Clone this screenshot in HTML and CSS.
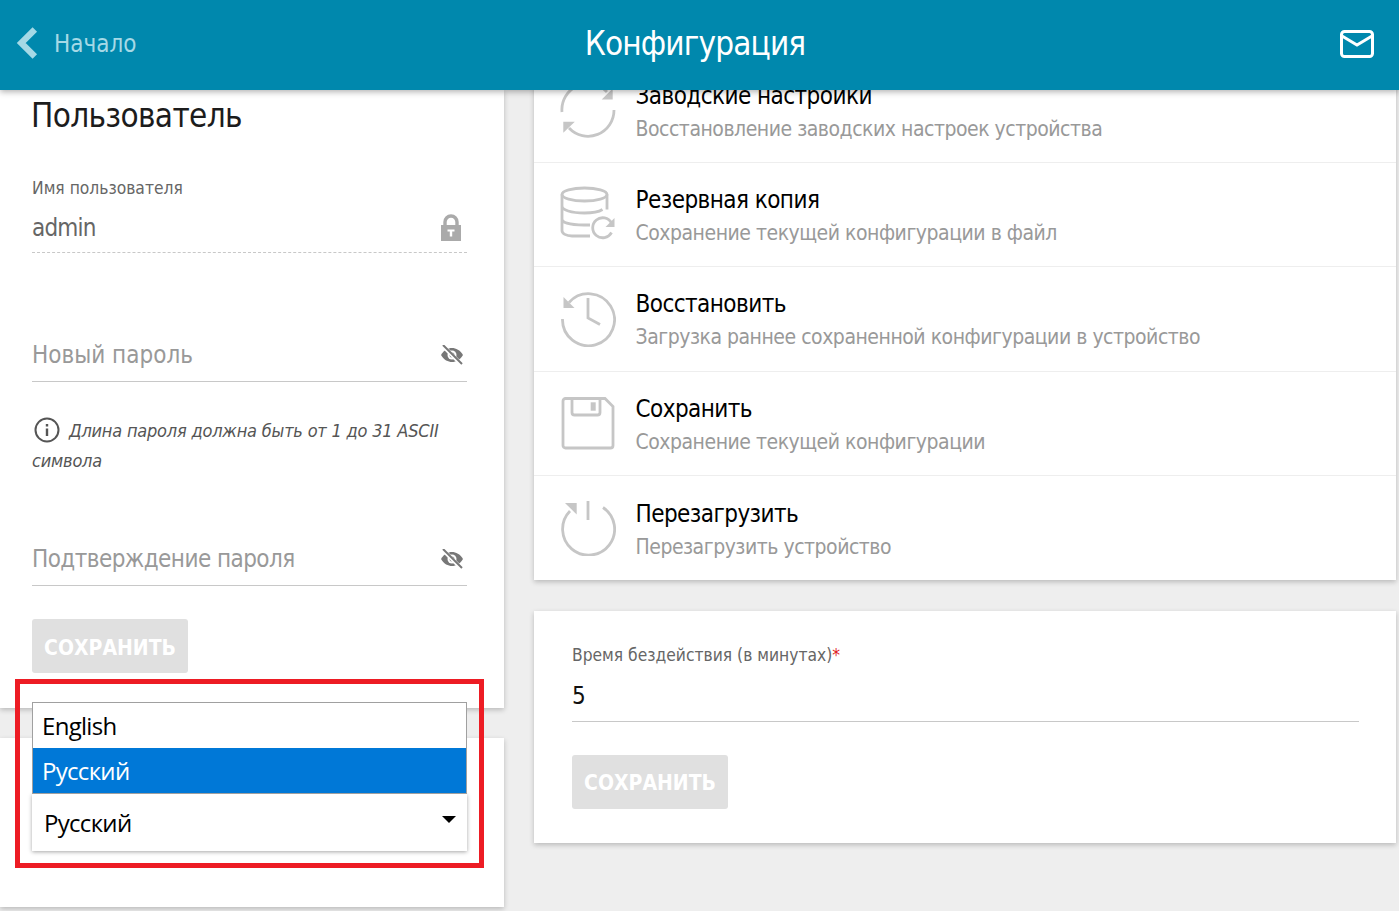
FILE: index.html
```html
<!DOCTYPE html>
<html lang="ru">
<head>
  <meta charset="UTF-8" />
  <title>Конфигурация</title>
  <link rel="stylesheet" href="styles.css">
</head>
<body>

<header class="topbar">
  <a class="back">
    <svg class="back-icon" viewBox="0 0 22 32"><path d="M18 3 5 16l13 13" fill="none" stroke="currentColor" stroke-width="6"/></svg>
    <span>Начало</span>
  </a>
  <h1 class="topbar-title">Конфигурация</h1>
  <svg class="mail-icon" viewBox="0 0 34 28"><rect x="1.5" y="1.5" width="31" height="25" rx="3" fill="none" stroke="#fff" stroke-width="3"/><path d="M2 6l15 9L32 6" fill="none" stroke="#fff" stroke-width="3"/></svg>
</header>

<main class="page">
  <div class="col-left">
    <section class="card user-card">
      <h2 class="card-title">Пользователь</h2>
      <div class="field-label field-label-first">Имя пользователя</div>
      <div class="field field-locked">
        <span class="field-value muted">admin</span>
        <svg class="lock-icon" viewBox="0 0 20 27"><path d="M4 12V8a6 6 0 0 1 12 0v4" fill="none" stroke="#aaa" stroke-width="3.4"/><path d="M0 11h20v16H0z" fill="#aaa"/><path d="M6.5 15.500h7v2h-2.300v5H8.800v-5H6.500z" fill="#fff"/></svg>
      </div>
      <div class="field field-new">
        <span class="placeholder">Новый пароль</span>
        <svg class="eye-icon" viewBox="0 0 22 20"><use href="#eye-off"/></svg>
      </div>
      <p class="hint">
        <svg class="info-icon" viewBox="0 0 26 26"><circle cx="13" cy="13" r="11.5" fill="none" stroke="#555" stroke-width="2"/><path d="M11.8 11.5h2.4v7.5h-2.4zM11.8 7h2.4v2.4h-2.4z" fill="#555"/></svg>
        Длина пароля должна быть от 1 до 31 ASCII символа
      </p>
      <div class="field field-confirm">
        <span class="placeholder">Подтверждение пароля</span>
        <svg class="eye-icon" viewBox="0 0 22 20"><use href="#eye-off"/></svg>
      </div>
      <button class="btn-save">СОХРАНИТЬ</button>
    </section>

    <section class="card lang-card">
      <div class="lang-select">
        <span>Русский</span>
        <i class="caret"></i>
      </div>
      <ul class="lang-list">
        <li>English</li>
        <li class="selected">Русский</li>
      </ul>
      <div class="highlight"></div>
    </section>
  </div>

  <div class="col-right">
    <section class="card menu-card">
      <div class="menu-row">
        <svg class="menu-icon" viewBox="0 0 56 56"><path d="M2 30A26 26 0 0 1 47 10M54 28A26 26 0 0 1 9 46"/><path class="solid" d="M52.7 6.500v11h-11zM3.300 50.700v-11h11.500z"/></svg>
        <div class="menu-text"><div class="menu-title">Заводские настройки</div><div class="menu-sub">Восстановление заводских настроек устройства</div></div>
      </div>
      <div class="menu-row">
        <svg class="menu-icon" viewBox="0 0 56 56"><ellipse cx="24.500" cy="8.500" rx="22.500" ry="6.500"/><path d="M2 8.500v36c0 3 4 5.500 10 5.500h18M2 20c0 4 9 7 22.500 7 6 0 14-1 18-3.500M47 8.500v15M2 33c0 3 6 6 22 6h6"/><path d="M51.500 37a10 10 0 1 0 0 9.500"/><path class="solid" d="M54.500 32v9h-9z"/></svg>
        <div class="menu-text"><div class="menu-title">Резервная копия</div><div class="menu-sub">Сохранение текущей конфигурации в файл</div></div>
      </div>
      <div class="menu-row">
        <svg class="menu-icon" viewBox="0 0 56 56"><path d="M9 11.500A26 26 0 1 1 2.500 28"/><path class="solid" d="M3.500 6v11h11z"/><path d="M28 7v20l12 6.500"/></svg>
        <div class="menu-text"><div class="menu-title">Восстановить</div><div class="menu-sub">Загрузка раннее сохраненной конфигурации в устройство</div></div>
      </div>
      <div class="menu-row">
        <svg class="menu-icon" viewBox="0 0 56 56"><path d="M5.500 3.500h39.500l8 8v39a2.500 2.500 0 0 1-2.500 2.500H5.500A2.500 2.500 0 0 1 3 50.500V6a2.500 2.500 0 0 1 2.500-2.500z"/><path d="M12 3.500v14a2.500 2.500 0 0 0 2.500 2.500h23a2.500 2.500 0 0 0 2.500-2.500v-14"/><path class="solid" d="M30.700 7.300h5v8.400h-5z"/></svg>
        <div class="menu-text"><div class="menu-title">Сохранить</div><div class="menu-sub">Сохранение текущей конфигурации</div></div>
      </div>
      <div class="menu-row">
        <svg class="menu-icon" viewBox="0 0 56 56"><path d="M43 7.500A26 26 0 1 1 10 11"/><path d="M28 1v19"/><path class="solid" d="M16.700 3v11.500L5 3z"/></svg>
        <div class="menu-text"><div class="menu-title">Перезагрузить</div><div class="menu-sub">Перезагрузить устройство</div></div>
      </div>
    </section>

    <section class="card idle-card">
      <div class="field-label">Время бездействия (в минутах)<span class="required">*</span></div>
      <div class="field field-idle"><span class="field-value">5</span></div>
      <button class="btn-save">СОХРАНИТЬ</button>
    </section>
  </div>
</main>

<svg class="defs" width="0" height="0">
  <symbol id="eye-off" viewBox="0 0 22 20">
    <path d="M0 10C3 5 7 3 11 3s8 2 11 7c-3 5-7 7-11 7S3 15 0 10z" fill="#777"/>
    <circle cx="11" cy="10" r="4.500" fill="#fff"/>
    <circle cx="11" cy="10" r="2.500" fill="#777"/>
    <path d="M2 1l18 18" stroke="#fff" stroke-width="4"/>
    <path d="M2 0l19 19" stroke="#777" stroke-width="2"/>
  </symbol>
</svg>

</body>
</html>
```

FILE: styles.css
```css
html, body {
  margin: 0;
  height: 100%;
}
body {
  font-family: "DejaVu Sans", sans-serif;
  font-stretch: condensed;
  background: #eeeeee;
  color: #111;
  overflow: hidden;
}
.defs {
  position: absolute;
}

/* top bar */
.topbar {
  position: relative;
  z-index: 5;
  height: 90px;
  background: #0088ad;
  box-shadow: 0 2px 6px rgba(0,0,0,0.3);
  display: flex;
  align-items: center;
  justify-content: center;
}
.back {
  position: absolute;
  left: 16px;
  top: 26px;
  display: flex;
  align-items: center;
  gap: 15px;
  color: #a5d9e6;
  font-size: 24px;
  height: 36px;
}
.back-icon {
  width: 23px;
  height: 34px;
  margin-top: -2px;
}
.topbar-title {
  margin: 0 9px 4px 0;
  font-size: 33px;
  font-weight: normal;
  letter-spacing: -0.85px;
  color: #fff;
}
.mail-icon {
  position: absolute;
  right: 25px;
  top: 30px;
  width: 34px;
  height: 28px;
}

/* page columns */
.page {
  display: grid;
  grid-template-columns: 504px 862px;
  column-gap: 30px;
  align-items: start;
}
.col-left {
  display: flex;
  flex-direction: column;
  gap: 30px;
}
.col-right {
  display: flex;
  flex-direction: column;
  gap: 30.6px;
  margin-top: -31.6px;
}
.card {
  background: #fff;
  box-shadow: 0 2px 5px rgba(0,0,0,0.22);
}

/* user card */
.user-card {
  padding: 0 37px 35px 32px;
}
.card-title {
  margin: 0 0 0 -1px;
  font-size: 33px;
  font-weight: normal;
  line-height: 52px;
  letter-spacing: -0.65px;
  color: #1c1c1c;
}
.field-label {
  font-size: 17.3px;
  line-height: 24px;
  color: #666;
}
.field-label-first {
  margin-top: 34px;
}
.field {
  display: flex;
  align-items: center;
  justify-content: space-between;
  height: 52px;
  border-bottom: 1px solid #c8c8c8;
}
.field-locked {
  height: 49px;
  padding-top: 3px;
  border-bottom: 1px dashed #c8c8c8;
}
.field-new {
  margin-top: 76px;
}
.field-confirm {
  margin-top: 58px;
  letter-spacing: -0.55px;
}
.field-idle {
  height: 50px;
  padding-top: 4px;
}
.field-value {
  font-size: 24px;
  color: #111;
}
.muted {
  color: #666;
  letter-spacing: -0.8px;
}
.placeholder {
  font-size: 24px;
  color: #999;
}
.lock-icon {
  width: 20px;
  height: 27px;
  margin-right: 6px;
}
.eye-icon {
  width: 22px;
  height: 20px;
  margin-right: 4px;
}
.hint {
  margin: 34px 0 -1px;
  font-size: 18px;
  line-height: 30px;
  font-style: italic;
  letter-spacing: -0.2px;
  color: #555;
}
.info-icon {
  width: 26px;
  height: 26px;
  margin: 0 4px 0 2px;
  vertical-align: -6px;
}
.btn-save {
  display: block;
  width: 156px;
  height: 54px;
  margin-top: 33px;
  padding: 3px 0 0;
  border: none;
  border-radius: 3px;
  background: #e0e0e0;
  color: #fff;
  font-family: inherit;
  font-stretch: inherit;
  font-size: 21px;
  font-weight: bold;
}

/* language card */
.lang-card {
  position: relative;
  height: 169px;
  box-sizing: border-box;
  padding: 56px 37px 0 32px;
}
.lang-select {
  display: flex;
  align-items: center;
  justify-content: space-between;
  height: 57px;
  padding: 0 11px 0 12px;
  background: #fff;
  box-shadow: 0 1px 4px rgba(0,0,0,0.35);
  font-family: "Open Sans", sans-serif;
  font-stretch: normal;
  font-size: 24px;
  letter-spacing: -0.7px;
  color: #000;
}
.caret {
  border-left: 7px solid transparent;
  border-right: 7px solid transparent;
  border-top: 7px solid #000;
  margin-bottom: 6px;
}
.lang-list {
  position: absolute;
  left: 32px;
  top: -36px;
  width: 435px;
  box-sizing: border-box;
  margin: 0;
  padding: 0;
  list-style: none;
  background: #fff;
  border: 1px solid #a0a0a0;
  font-family: "Open Sans", sans-serif;
  font-stretch: normal;
  font-size: 24px;
  letter-spacing: -0.7px;
  color: #000;
}
.lang-list li {
  height: 45px;
  line-height: 45px;
  padding-left: 9px;
}
.lang-list .selected {
  background: #0078d7;
  color: #fff;
}
.highlight {
  position: absolute;
  left: 15px;
  top: -59px;
  width: 469px;
  height: 189px;
  box-sizing: border-box;
  border: 5px solid #ed1c24;
  pointer-events: none;
}

/* menu card */
.menu-row {
  display: flex;
  align-items: center;
  gap: 19.5px;
  height: 104.4px;
  box-sizing: border-box;
  padding-left: 26px;
  border-bottom: 1px solid #eeeeee;
}
.menu-row:last-child {
  border-bottom: none;
}
.menu-icon {
  width: 56px;
  height: 56px;
  flex: none;
  fill: none;
  stroke: #c6c6c6;
  stroke-width: 2.8;
}
.menu-icon .solid {
  fill: #c6c6c6;
  stroke: none;
}
.menu-text {
  padding-top: 4px;
}
.menu-title {
  font-size: 24px;
  line-height: 34px;
  letter-spacing: -0.55px;
  color: #000;
}
.menu-sub {
  font-size: 21px;
  line-height: 33px;
  letter-spacing: -0.48px;
  color: #999;
}

/* idle card */
.idle-card {
  padding: 32px 37px 34px 38px;
}
.required {
  color: #e01b24;
}
```
